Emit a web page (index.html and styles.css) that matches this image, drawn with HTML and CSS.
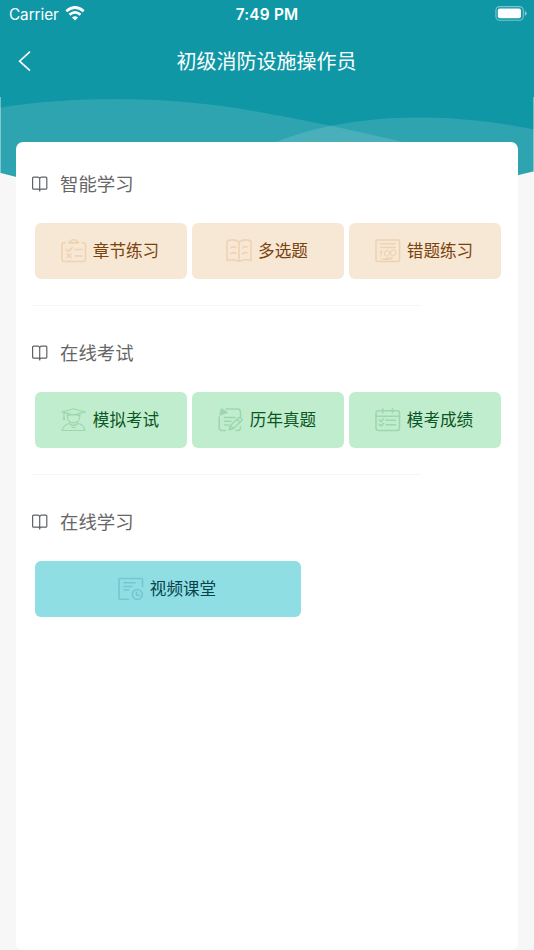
FILE: index.html
```html
<!DOCTYPE html>
<html lang="zh-CN">

<head>
  <meta charset="UTF-8" />
  <title>初级消防设施操作员</title>
  <link rel="stylesheet" href="styles.css">
</head>

<body>

  <!-- Waves behind the header and the card -->
  <svg class="waves" viewBox="0 0 534 180" preserveAspectRatio="none">
    <path fill="#0f97a6" d="M0 0H534V171.2Q400 205 267 205Q120 205 0 172.8Z" />
    <path fill="#fff" fill-opacity=".13" d="M0 107.7C85 94 185 97 267 113.5C320 123 370 134 403 142V180H28L0 172.8Z" />
    <path fill="#fff" fill-opacity=".13" d="M276 142C345 114 440 110 534 129.5V171.2L500 180H276Z" />
    <path fill="#fff" fill-opacity=".4" d="M0 97H1V173H0ZM533 97H534V171H533Z" />
  </svg>

  <header>
    <div class="status">
      <div class="carrier">
        <span>Carrier</span>
        <svg class="wifi" width="20" height="15" viewBox="0 0 20 15">
          <g fill="none" stroke="#fff" stroke-width="2.7">
            <path d="M1.3 5.3Q10-2.3 18.7 5.3" />
            <path d="M4.5 8.7Q10 4 15.5 8.7" />
          </g>
          <path fill="#fff" d="M7 11.4Q10 8.9 13 11.4L10 14.5Z" />
        </svg>
      </div>
      <div class="time">7:49 PM</div>
      <svg class="battery" width="32" height="15" viewBox="0 0 32 15">
        <rect x=".9" y=".6" width="27.4" height="13.6" rx="3.8" fill="none" stroke="#fff" stroke-opacity=".45" stroke-width="1.1" />
        <rect x="2.8" y="2.5" width="23.2" height="9.8" rx="2" fill="#fff" />
        <path fill="#fff" fill-opacity=".5" d="M29.8 5Q31.7 5.8 31.7 7.4T29.8 9.8Z" />
      </svg>
    </div>
    <nav>
      <svg class="back" width="14" height="22" viewBox="0 0 14 22">
        <path fill="none" stroke="#fff" stroke-width="1.6" d="M13 1.7L2.6 11.2L13 20.7" />
      </svg>
      <h1>初级消防设施操作员</h1>
    </nav>
  </header>

  <svg width="0" height="0" class="defs">
    <symbol id="book" viewBox="0 0 16 16">
      <path d="M7.7 3.1Q7.7 1.2 5.7 1.2H1.6Q.6 1.2 .6 2.2V12.2Q.6 13.2 1.6 13.2H6.1Q7.7 13.2 7.7 14.8Q7.7 13.2 9.3 13.2H13.8Q14.8 13.2 14.8 12.2V2.2Q14.8 1.2 13.8 1.2H9.7Q7.7 1.2 7.7 3.1V15.6" />
    </symbol>
  </svg>

  <main>
    <section>
      <h2><svg class="book"><use href="#book" /></svg><span>智能学习</span></h2>
      <div class="items orange">
        <div class="item">
          <svg class="icon" viewBox="0 0 26 24">
            <path d="M4.5 3.7H3Q1 3.7 1 5.7V20.5Q1 22.5 3 22.5H22.5Q24.5 22.5 24.5 20.5V5.7Q24.5 3.7 22.5 3.7H21M8 3.9V3.2Q8 2.6 9.3 2.6Q10.2 .8 12.7 .8T16.1 2.6Q17.5 2.6 17.5 3.2V3.9Z" />
            <path d="M5 10.3L7.5 12.3L11.3 8.7M14 10.5H21M6 15L10 18.5M10 15L6 18.5M14 17H21" />
          </svg>
          <span>章节练习</span>
        </div>
        <div class="item">
          <svg class="icon" viewBox="0 0 26 24">
            <path d="M13 3.2Q7.5-.8 1 2.2V21.5Q7.5 19.5 13 22.4Q18.5 19.5 25 21.5V2.2Q18.5-.8 13 3.2V22.4" />
            <path d="M5 8.7Q7.5 7 9.8 8.7M5 14.5Q7.5 12.8 9.8 14.5M16.5 9Q18.3 7 21 7.9M16.5 14.8Q18.3 12.8 21 13.8" />
          </svg>
          <span>多选题</span>
        </div>
        <div class="item">
          <svg class="icon" viewBox="0 0 26 24">
            <rect x="1" y="1" width="23.5" height="21.5" rx="1.5" />
            <path d="M5.5 4.8H20M5.5 8.5H20" />
            <g class="thin">
              <path d="M4.9 13.3L7.2 12L5.6 17.3M6 20.3L18 18M10 20.8L17 19.8" />
              <ellipse cx="12" cy="14.3" rx="2.3" ry="2.9" transform="rotate(30 12 14.3)" />
              <ellipse cx="18.2" cy="13.7" rx="2.3" ry="2.9" transform="rotate(30 18.2 13.7)" />
            </g>
          </svg>
          <span>错题练习</span>
        </div>
      </div>
    </section>

    <section>
      <h2><svg class="book"><use href="#book" /></svg><span>在线考试</span></h2>
      <div class="items green">
        <div class="item">
          <svg class="icon thin" viewBox="0 0 26 24">
            <path d="M1 3.8Q7 2.8 12.5 .8Q18 2.8 24.5 3.8Q18 5 12.5 7Q7 5 1 3.8ZM3 4.5V10M2.2 11.5L3 8.8L3.8 11.5M6.3 5.5V8Q12.5 5.2 18.8 8V5.5" />
            <path d="M6.5 8Q6.5 14.8 12.5 14.8T18.8 8M8.3 15.5Q3 16.3 1 22.5H24Q22.5 16.3 17 15.5M8.3 15.5Q12.5 19.5 17 15.5M10.8 19.5H14.2" />
          </svg>
          <span>模拟考试</span>
        </div>
        <div class="item">
          <svg class="icon" viewBox="0 0 26 24">
            <path d="M8 1H19.5Q22.5 1 22.5 4V9M1.2 9V19.5Q1.2 22.5 4.2 22.5H7.5M18 22.5H19.5Q22.5 22.5 22.5 19M6.5 9.5H17M6.5 13.2H13M6.5 17H10.5" />
            <path d="M11.3 21.8L12.3 17.5L21 9.5Q23 9.7 24.3 12L15.5 20.5ZM19 11.5L22 14.5M12.3 17.5L15.5 20.5" />
            <path class="fill" d="M2 6.8L3.5 1.2L8.8 4.5Z" />
          </svg>
          <span>历年真题</span>
        </div>
        <div class="item">
          <svg class="icon" viewBox="0 0 26 24">
            <rect x="1" y="2.8" width="23.5" height="19.7" rx="2.2" />
            <path d="M1 8.2H24.5M7.8 .8V4.8M17.5 .8V4.8M4.2 12L6 13.5L8.5 11M4.2 16.4L6 18L8.5 15.4M11 12.3H20.5M11 16.8H20.5" />
          </svg>
          <span>模考成绩</span>
        </div>
      </div>
    </section>

    <section>
      <h2><svg class="book"><use href="#book" /></svg><span>在线学习</span></h2>
      <div class="items blue">
        <div class="item wide">
          <svg class="icon" viewBox="0 0 26 24">
            <path d="M10.5 22.2H2Q1 22.2 1 21.2V2.5Q1 1.5 2 1.5H23.5Q24.5 1.5 24.5 2.5V9.5M6 5.8H17M6 9.5H13.5M6 13H10.5" />
            <circle cx="19.3" cy="17.5" r="5" />
            <path d="M18.5 15.2V18.3H21.5" />
          </svg>
          <span>视频课堂</span>
        </div>
      </div>
    </section>
  </main>

</body>

</html>
```

FILE: styles.css
```css
* {
  box-sizing: border-box;
}

body {
  margin: 0;
  height: 950px;
  display: flex;
  flex-direction: column;
  position: relative;
  overflow: hidden;
  background: #f7f7f7;
  font-family: "Noto Sans CJK SC", sans-serif;
}

h1,
h2 {
  margin: 0;
  font-weight: 400;
}

.waves {
  position: absolute;
  top: 0;
  left: 0;
  width: 534px;
  height: 180px;
}

.defs {
  position: absolute;
}

header {
  position: relative;
  height: 142px;
  color: #fff;
}

.status {
  display: grid;
  grid-template-columns: 1fr auto 1fr;
  align-items: center;
  height: 28px;
  padding: 0 7px 0 9px;
  font: 15.5px Inter, sans-serif;
}

.carrier {
  display: flex;
  align-items: center;
  gap: 6px;
  font-size: 15.3px;
  letter-spacing: -0.05px;
}

.wifi {
  margin-top: -2px;
}

.time {
  margin-right: 2px;
  font-size: 15.3px;
  font-weight: 600;
  letter-spacing: 0.25px;
}

.battery {
  justify-self: end;
  margin-top: -2px;
}

nav {
  display: grid;
  grid-template-columns: 14px 1fr 14px;
  align-items: center;
  height: 66px;
  padding: 0 18px 0 17px;
}

h1 {
  font-size: 20px;
  line-height: 30px;
  text-align: center;
}

main {
  position: relative;
  flex: 1;
  margin: 0 16px;
  padding: 0 16px;
  border-radius: 7px;
  background: #fff;
}

section {
  height: 169px;
  padding-top: 28px;
}

/* short line between the blocks */
section:not(:last-child)::after {
  content: "";
  display: block;
  width: 389px;
  height: 1px;
  margin-top: 26px;
  background: #f5f5f5;
}

h2 {
  display: flex;
  align-items: center;
  gap: 12px;
  height: 28px;
  font-size: 18.4px;
  color: #666;
}

h2 span,
.item span {
  padding-bottom: 2px;
}

.book {
  width: 16px;
  height: 16px;
  fill: none;
  stroke: #606266;
  stroke-width: 1.2;
}

.items {
  display: flex;
  gap: 5px;
  margin: 25px 0 0 3px;
}

.item {
  display: flex;
  align-items: center;
  justify-content: center;
  gap: 6px;
  width: 152px;
  height: 56px;
  padding-right: 2px;
  border-radius: 6px;
  font-size: 16.6px;
}

.wide {
  width: 266px;
}

.icon {
  width: 26px;
  height: 24px;
  fill: none;
  stroke-width: 1.6;
  stroke-linecap: round;
  stroke-linejoin: round;
}

.thin {
  stroke-width: 1.2;
}

.orange .item {
  background: #f7e7d5;
  color: #7a430b;
}

.orange .icon {
  stroke: #f0d2b1;
}

.green .item {
  background: #c0edce;
  color: #0b5523;
}

.green .icon {
  stroke: #9ed6b0;
}

.green .fill {
  fill: #9ed6b0;
}

.blue .item {
  background: #8edee4;
  color: #07424b;
}

.blue .icon {
  stroke: #77c5cd;
}
```
